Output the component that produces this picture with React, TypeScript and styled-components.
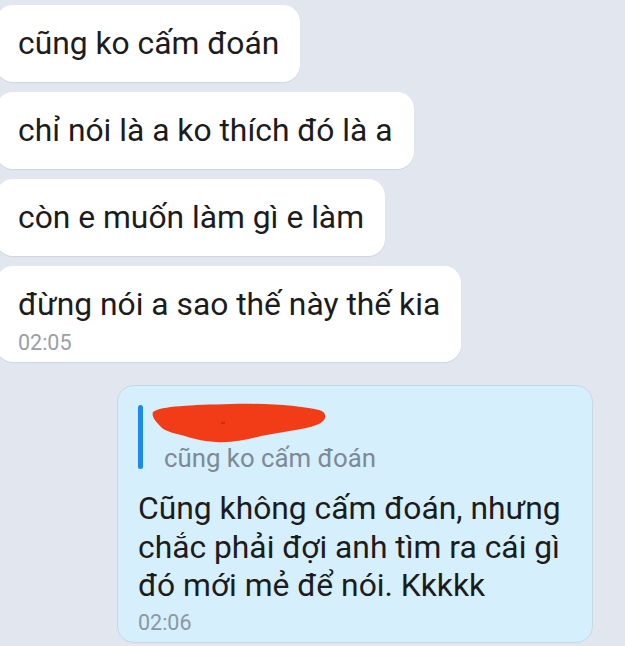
import React from "react";
import styled, { createGlobalStyle } from "styled-components";

const Global = createGlobalStyle`
  html, body { margin: 0; padding: 0; background: #e2e7ef; }
  body { font-family: Roboto, "Noto Sans", "Liberation Sans", sans-serif; overflow: hidden; }
`;

const Chat = styled.div`
  display: flex;
  flex-direction: column;
  align-items: flex-start;
  gap: 10px;
  padding-top: 5px;
  width: 625px;
  height: 646px;
  box-sizing: border-box;
  overflow: hidden;
`;

const Bubble = styled.div`
  box-sizing: border-box;
  width: fit-content;
  margin-left: -4px;
  padding: 19px 21px 20px 22px;
  background: #ffffff;
  border-radius: 17px;
  box-shadow: 0 1px 1px rgba(120, 135, 155, 0.18);
`;

const Text = styled.div`
  font-size: 31.8px;
  line-height: 38px;
  color: #1c1c1c;
  white-space: nowrap;
`;

const Time = styled.div<{ $tone?: "white" | "blue" }>`
  font-size: 21.5px;
  line-height: 24px;
  margin-top: ${(p) => (p.$tone === "blue" ? "6px" : "8px")};
  margin-bottom: ${(p) => (p.$tone === "blue" ? "0" : "-13px")};
  color: ${(p) => (p.$tone === "blue" ? "#8b98a4" : "#9aa0a6")};
`;

const Mine = styled.div`
  box-sizing: border-box;
  width: 476px;
  margin: 13px 32px 0 auto;
  padding: 17px 20px 7px 20px;
  background: #d5effd;
  border: 1px solid #c4d8e6;
  border-radius: 17px;
`;

const Quote = styled.div`
  display: flex;
  gap: 8px;
  margin: 0 0 16px 0;
`;

const QuoteBar = styled.div`
  width: 5px;
  border-radius: 3px;
  background: #1a8af0;
  margin: 2px 0 4px 0;
`;

const QuoteBody = styled.div`
  display: flex;
  flex-direction: column;
`;

const QuoteText = styled.div`
  font-size: 25.8px;
  line-height: 30px;
  color: #7d8a95;
  padding-left: 13px;
  white-space: nowrap;
`;

const MineText = styled.div`
  font-size: 31.8px;
  line-height: 38.5px;
  color: #1c1c1c;
`;

const Scribble = () => (
  <svg width="176" height="40" viewBox="0 0 176 40" style={{ display: "block" }}>
    <path
      d="M2,9 C10,3 40,2 80,1 C120,0 150,3 168,7 C175,9 176,14 172,18 C168,22 160,24 150,26 C140,28 125,30 110,33 C95,37 80,40 65,39 C50,38 40,35 30,32 C22,30 14,28 10,24 C6,20 0,14 2,9 Z"
      fill="#f23c17"
    />
    <path d="M70,20 L74,20" stroke="#c02a10" strokeWidth="1.5" />
  </svg>
);

export default function App() {
  return (
    <>
      <Global />
      <Chat>
        <Bubble>
          <Text>cũng ko cấm đoán</Text>
        </Bubble>
        <Bubble>
          <Text>chỉ nói là a ko thích đó là a</Text>
        </Bubble>
        <Bubble>
          <Text>còn e muốn làm gì e làm</Text>
        </Bubble>
        <Bubble>
          <Text>đừng nói a sao thế này thế kia</Text>
          <Time>02:05</Time>
        </Bubble>
        <Mine>
          <Quote>
            <QuoteBar />
            <QuoteBody>
              <Scribble />
              <QuoteText>cũng ko cấm đoán</QuoteText>
            </QuoteBody>
          </Quote>
          <MineText>
            Cũng không cấm đoán, nhưng chắc phải đợi anh tìm ra cái gì đó mới mẻ để nói. Kkkkk
          </MineText>
          <Time $tone="blue">02:06</Time>
        </Mine>
      </Chat>
    </>
  );
}
